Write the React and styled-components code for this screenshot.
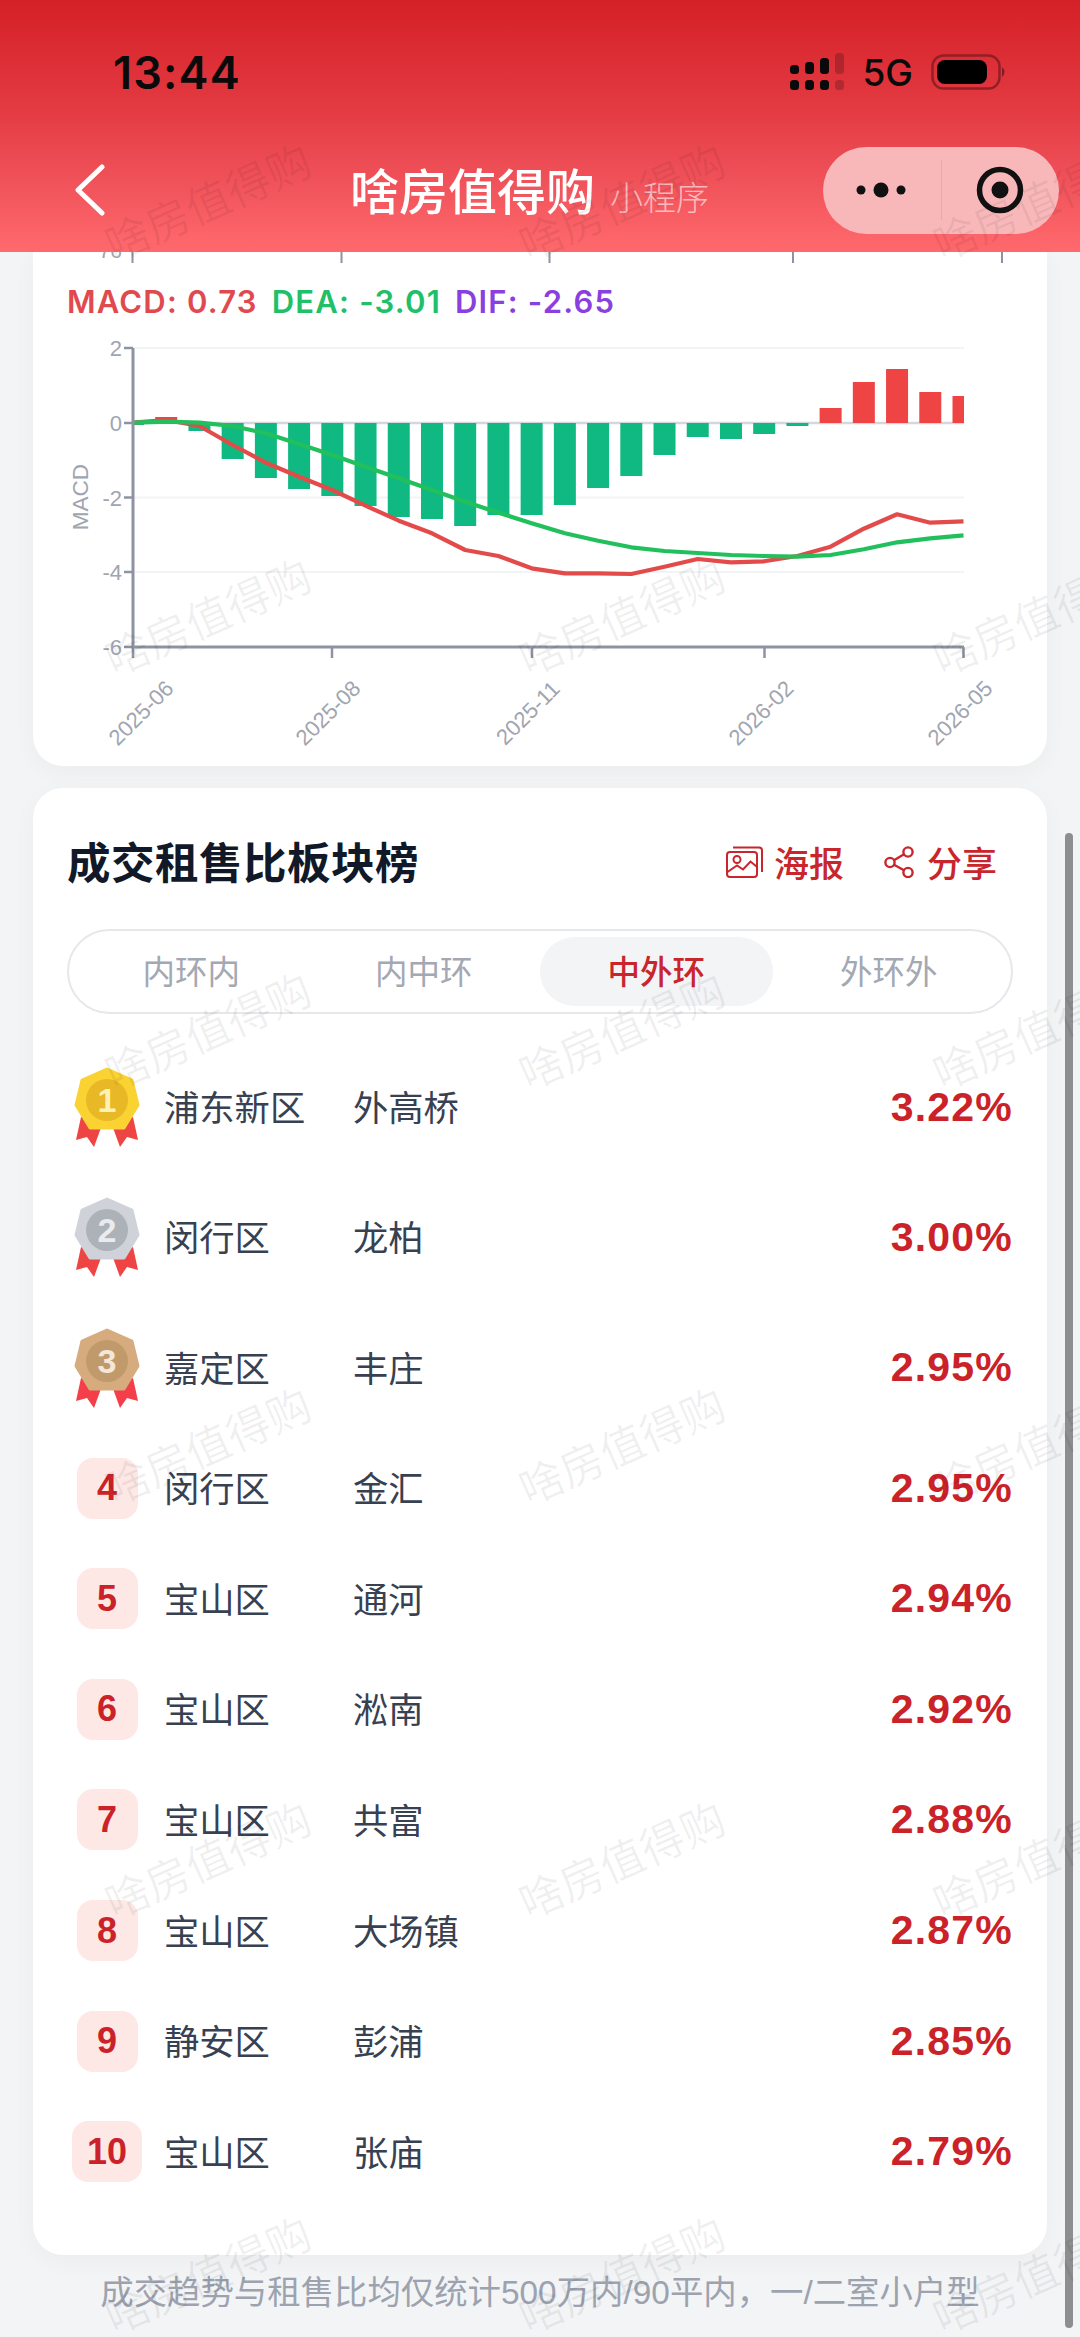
import React from 'react';
import styled, { createGlobalStyle } from 'styled-components';

const CJK = '"Liberation Sans", "Noto Sans CJK SC", sans-serif';

const Global = createGlobalStyle`
  html, body { margin: 0; padding: 0; background: #f3f4f6; }
  body { font-family: ${CJK}; }
  * { box-sizing: border-box; }
`;

const Page = styled.div`
  position: relative;
  width: 1080px;
  height: 2337px;
  overflow: hidden;
  background: #f3f4f6;
`;

const Header = styled.header`
  height: 252px;
  background: linear-gradient(180deg, #d52027 0%, #e23840 40%, #f0525a 72%, #ff6a6d 100%);
`;

const StatusBar = styled.div`
  height: 144px;
  display: flex;
  align-items: center;
  padding: 0 73px 0 113px;
`;

const Time = styled.span`
  font-family: Inter, sans-serif;
  font-weight: 600;
  font-size: 45px;
  color: #0a0a0a;
  letter-spacing: 1.2px;
`;

const StatusIcons = styled.div`
  margin-left: auto;
  display: flex;
  align-items: center;
  gap: 18px;
`;

const Net = styled.span`
  font-family: Inter, sans-serif;
  font-weight: 500;
  font-size: 37px;
  line-height: 1;
  color: #0a0a0a;
`;

const NavBar = styled.div`
  height: 92px;
  display: flex;
  align-items: center;
  padding: 0 21px 0 74px;
`;

const BackIcon = styled.svg`
  width: 32px;
  height: 52px;
  flex: none;
`;

const TitleGroup = styled.div`
  margin-left: 244px;
  margin-top: -3px;
  display: flex;
  align-items: baseline;
  gap: 15px;
`;

const Title = styled.span`
  font-size: 49px;
  font-weight: 500;
  font-family: "Noto Sans CJK SC", sans-serif;
  color: #fff;
`;

const SubTitle = styled.span`
  font-size: 33px;
  font-family: "Noto Sans CJK SC", sans-serif;
  font-weight: 300;
  color: rgba(255, 255, 255, 0.6);
`;

const Capsule = styled.div`
  margin-left: auto;
  width: 236px;
  height: 87px;
  border-radius: 44px;
  background: #f8b8ba;
  display: flex;
  align-items: center;
`;

const CapsulePart = styled.div`
  flex: 1;
  height: 100%;
  display: flex;
  align-items: center;
  justify-content: center;
  & + & { border-left: 1px solid rgba(0, 0, 0, 0.08); height: 60px; }
`;

const Card = styled.section`
  margin: 0 33px;
  background: #fff;
  box-shadow: 0 6px 24px rgba(0, 0, 0, 0.035);
`;

const ChartCard = styled(Card)`
  height: 514px;
  border-radius: 0 0 30px 30px;
`;

const TopTicks = styled.svg`
  display: block;
  width: 1014px;
  height: 11px;
`;

const Legend = styled.div`
  margin: 21px 0 5px 34px;
  height: 36px;
  line-height: 36px;
  font-size: 31px;
  font-weight: 600;
  font-family: Inter, sans-serif;
  letter-spacing: 1.2px;
  display: flex;
  gap: 14px;
  white-space: nowrap;
`;

const LegendItem = styled.span`
  color: ${p => p.$color};
`;

const ChartSvg = styled.svg`
  display: block;
  width: 1014px;
  height: 430px;
`;

const ListCard = styled(Card)`
  margin-top: 22px;
  height: 1467px;
  border-radius: 30px;
  padding: 50px 34px 0;
`;

const ListHead = styled.div`
  height: 48px;
  display: flex;
  align-items: center;
`;

const ListTitle = styled.h2`
  margin: -4px 0 0;
  font-size: 43.5px;
  font-weight: 700;
  font-family: "Noto Sans CJK SC", sans-serif;
  color: #111827;
  letter-spacing: 0.5px;
`;

const Actions = styled.div`
  margin-left: auto;
  margin-right: 16px;
  display: flex;
  align-items: center;
  gap: 40px;
`;

const Action = styled.span`
  display: inline-flex;
  align-items: center;
  gap: ${p => p.$gap}px;
  font-size: 35px;
  line-height: 44px;
  font-weight: 500;
  font-family: "Noto Sans CJK SC", sans-serif;
  color: #c9252c;
`;

const Tabs = styled.div`
  margin-top: 43px;
  height: 85px;
  border: 2px solid #e5e7eb;
  border-radius: 43px;
  padding: 6px;
  display: grid;
  grid-template-columns: repeat(4, 1fr);
`;

const Tab = styled.div`
  display: flex;
  align-items: center;
  justify-content: center;
  padding-bottom: 4px;
  border-radius: 36px;
  font-size: 32.5px;
  font-family: "Noto Sans CJK SC", sans-serif;
  font-weight: ${p => (p.$active ? 500 : 400)};
  color: ${p => (p.$active ? '#c9252c' : '#a3a8b2')};
  background: ${p => (p.$active ? '#f3f4f6' : 'transparent')};
`;

const Rows = styled.div`
  margin-top: 28px;
`;

const Row = styled.div`
  height: ${p => (p.$medal ? 130.3 : 110.6)}px;
  display: grid;
  grid-template-columns: 80px 189px 1fr auto;
  align-items: center;
`;

const RankCell = styled.div`
  display: flex;
  justify-content: center;
`;

const Pill = styled.div`
  min-width: 61px;
  height: 61px;
  padding: 0 15px;
  border-radius: 16px;
  background: #fde8e5;
  color: #cb2229;
  font-size: 36px;
  font-weight: 700;
  font-family: "Liberation Sans", sans-serif;
  display: flex;
  align-items: center;
  justify-content: center;
`;

const District = styled.div`
  margin: -3px 0 0 17px;
  font-size: 35.3px;
  font-family: "Noto Sans CJK SC", sans-serif;
  color: #374151;
  white-space: nowrap;
`;

const Area = styled.div`
  margin: -3px 0 0 17px;
  font-size: 35.3px;
  font-family: "Noto Sans CJK SC", sans-serif;
  color: #374151;
`;

const Ratio = styled.div`
  font-size: 41px;
  font-weight: 700;
  letter-spacing: 1.2px;
  font-family: "Liberation Sans", sans-serif;
  color: #cb2229;
`;

const Footnote = styled.div`
  margin-top: 18px;
  height: 40px;
  line-height: 40px;
  text-align: center;
  font-size: 33.4px;
  color: #9ca3af;
  font-family: "Liberation Sans", "Noto Sans CJK SC", sans-serif;
  white-space: nowrap;
`;

const Watermarks = styled.div`
  position: absolute;
  top: -7px;
  left: 0;
  display: grid;
  grid-template-columns: repeat(3, 414px);
  grid-auto-rows: 414.5px;
  pointer-events: none;
`;

const Mark = styled.span`
  display: flex;
  align-items: center;
  justify-content: center;
  font-size: 44px;
  font-family: "Noto Sans CJK SC", sans-serif;
  white-space: nowrap;
  color: rgba(0, 0, 0, 0.06);
  transform: rotate(-24deg);
`;

const Scrollbar = styled.div`
  position: absolute;
  left: 1065px;
  top: 833px;
  width: 8px;
  height: 1495px;
  border-radius: 4px;
  background: rgba(0, 0, 0, 0.42);
`;

const BARS = [-2, 6, -8, -36, -55, -66, -73, -83, -94, -96, -103, -92, -92, -82, -65, -53, -32, -14, -16, -11, -3, 15, 41, 54, 31, 27];
const RED = [308, 300, 318, 375, 428, 470, 510, 557, 602, 640, 690, 708, 745, 760, 760, 762, 740, 717, 727, 724, 708, 680, 626, 583, 608, 604];
const GREEN = [308, 305, 308, 318, 340, 372, 405, 440, 475, 510, 545, 578, 610, 640, 662, 682, 693, 699, 705, 708, 710, 705, 688, 667, 655, 646];
const X0 = 133;
const BAND = 33.22;
const px = i => X0 + i * BAND;
const line = arr => arr.map((z, i) => `${px(i).toFixed(1)},${(320 + z / 3).toFixed(1)}`).join(' ');
const YS = [[2, 348], [0, 423], [-2, 497.5], [-4, 572], [-6, 647]];
const XT = [
  ['2025-06', 133, 141],
  ['2025-08', 332, 328],
  ['2025-11', 532, 528],
  ['2026-02', 764.5, 761],
  ['2026-05', 963.5, 960],
];
const AXIS = '#8e93a1';
const TICK_TEXT = '#a0a5af';

function MacdChart() {
  return (
    <ChartSvg viewBox="33 325 1014 430">
      {YS.filter(y => y[0] !== 0 && y[0] !== -6).map(([v, y]) => (
        <line key={v} x1={X0} x2={964} y1={y} y2={y} stroke="#f3f4f6" strokeWidth="2" />
      ))}
      <line x1={X0} x2={964} y1={423} y2={423} stroke="#d5d7de" strokeWidth="2.5" />
      {BARS.map((h, i) => {
        const c = px(i);
        const l = Math.max(c - 11, X0);
        const r = Math.min(c + 11, 964);
        return (
          <rect
            key={i}
            x={l}
            width={r - l}
            y={h > 0 ? 423 - h : 423}
            height={Math.abs(h)}
            fill={h > 0 ? '#ef4444' : '#10b981'}
          />
        );
      })}
      <polyline points={line(RED)} fill="none" stroke="#e34b4b" strokeWidth="4.2" strokeLinejoin="round" />
      <polyline points={line(GREEN)} fill="none" stroke="#22c05c" strokeWidth="4.2" strokeLinejoin="round" />
      <path d="M133 348 V647 H964" fill="none" stroke={AXIS} strokeWidth="3" />
      {YS.map(([v, y]) => (
        <g key={v}>
          <line x1={124} x2={133} y1={y} y2={y} stroke={AXIS} strokeWidth="2.5" />
          <text x={122} y={y + 8} textAnchor="end" fontSize="22" fontFamily="Liberation Sans" fill={TICK_TEXT}>{v}</text>
        </g>
      ))}
      <text transform="translate(88 497) rotate(-90)" textAnchor="middle" fontSize="22.5" fontFamily="Liberation Sans" fill={TICK_TEXT}>MACD</text>
      {XT.map(([t, x, c]) => (
        <g key={t}>
          <line x1={x} x2={x} y1={647} y2={658} stroke={AXIS} strokeWidth="2.5" />
          <text transform={`translate(${c} 713) rotate(-45)`} textAnchor="middle" dominantBaseline="central" fontSize="22" fontFamily="Liberation Sans" fill={TICK_TEXT}>{t}</text>
        </g>
      ))}
    </ChartSvg>
  );
}

const MEDALS = {
  1: { body: '#fad232', inner: '#e9b826', num: '#fdf1b5', rib: '#ef4444' },
  2: { body: '#cfd3d9', inner: '#adb2b9', num: '#e9ebee', rib: '#ef4444' },
  3: { body: '#d6ab7d', inner: '#c19a6c', num: '#f3e7da', rib: '#f43f4a' },
};

function Medal({ n }) {
  const m = MEDALS[n];
  return (
    <svg width="66" height="80" viewBox="0 0 66 80">
      <polygon points="7,50 2,73 13,70 20,80 28,58" fill={m.rib} />
      <polygon points="59,50 64,73 53,70 46,80 38,58" fill={m.rib} />
      <polygon points="33,2 58,13 64,38 50,61 16,61 2,38 8,13" fill={m.body} stroke={m.body} strokeWidth="3" strokeLinejoin="round" />
      <circle cx="33" cy="33" r="21" fill={m.inner} />
      <text x="33" y="45" textAnchor="middle" fontSize="34" fontWeight="700" fontFamily="Liberation Sans" fill={m.num}>{n}</text>
    </svg>
  );
}

const DATA = [
  ['浦东新区', '外高桥', '3.22%'],
  ['闵行区', '龙柏', '3.00%'],
  ['嘉定区', '丰庄', '2.95%'],
  ['闵行区', '金汇', '2.95%'],
  ['宝山区', '通河', '2.94%'],
  ['宝山区', '淞南', '2.92%'],
  ['宝山区', '共富', '2.88%'],
  ['宝山区', '大场镇', '2.87%'],
  ['静安区', '彭浦', '2.85%'],
  ['宝山区', '张庙', '2.79%'],
];

export default function App() {
  return (
    <Page>
      <Global />
      <Header>
        <StatusBar>
          <Time>13:44</Time>
          <StatusIcons>
            <svg width="54" height="38" viewBox="0 0 54 38">
              {[0, 15, 30, 45].map((x, i) => (
                <g key={x} fill="#0a0a0a" opacity={i === 3 ? 0.22 : 1}>
                  <rect x={x} y={[12, 9, 5, 0][i]} width="9" height={[9, 12, 16, 21][i]} rx="3.5" />
                  <rect x={x} y="27" width="9" height="10" rx="3.5" />
                </g>
              ))}
            </svg>
            <Net>5G</Net>
            <svg width="76" height="36" viewBox="0 0 76 36">
              <rect x="1.5" y="1.5" width="67" height="33" rx="11" fill="none" stroke="#7a1a20" strokeOpacity="0.75" strokeWidth="2.5" />
              <rect x="6" y="6" width="50" height="24" rx="8" fill="#000" />
              <path d="M71 13 q5 5 0 10 z" fill="#7a1a20" opacity="0.9" />
            </svg>
          </StatusIcons>
        </StatusBar>
        <NavBar>
          <BackIcon viewBox="0 0 32 52">
            <path d="M28 3 L4 26 L28 49" fill="none" stroke="#fff" strokeWidth="5" strokeLinecap="round" strokeLinejoin="round" />
          </BackIcon>
          <TitleGroup>
            <Title>啥房值得购</Title>
            <SubTitle>小程序</SubTitle>
          </TitleGroup>
          <Capsule>
            <CapsulePart>
              <svg width="54" height="20" viewBox="0 0 54 20">
                <circle cx="6" cy="10" r="4.5" fill="#111" />
                <circle cx="26" cy="10" r="7.5" fill="#111" />
                <circle cx="46" cy="10" r="4.5" fill="#111" />
              </svg>
            </CapsulePart>
            <CapsulePart>
              <svg width="50" height="50" viewBox="0 0 50 50">
                <circle cx="25" cy="25" r="20.5" fill="none" stroke="#111" strokeWidth="5.5" />
                <circle cx="25" cy="25" r="8.5" fill="#111" />
              </svg>
            </CapsulePart>
          </Capsule>
        </NavBar>
      </Header>

      <ChartCard>
        <TopTicks viewBox="33 252 1014 11">
          <text x="122" y="258" textAnchor="end" fontSize="21" fontFamily="Liberation Sans" fill={TICK_TEXT}>76</text>
          {[132.5, 341.5, 549.5, 793, 1002].map(x => (
            <line key={x} x1={x} x2={x} y1="252" y2="263" stroke={AXIS} strokeWidth="2" />
          ))}
        </TopTicks>
        <Legend>
          <LegendItem $color="#e04a4e">MACD: 0.73</LegendItem>
          <LegendItem $color="#20bf68">DEA: -3.01</LegendItem>
          <LegendItem $color="#8a3fe0">DIF: -2.65</LegendItem>
        </Legend>
        <MacdChart />
      </ChartCard>

      <ListCard>
        <ListHead>
          <ListTitle>成交租售比板块榜</ListTitle>
          <Actions>
            <Action $gap={11}>
              <svg width="37" height="32" viewBox="0 0 37 32" fill="none" stroke="#c9252c" strokeWidth="2">
                <rect x="1" y="6" width="30" height="25" rx="3" />
                <path d="M7 1.5 H33 a3 3 0 0 1 3 3 V26" />
                <circle cx="11" cy="13.5" r="3.5" />
                <path d="M1.5 26 L11 19.5 L17 23.5 L24.5 15.5 L30.5 20.5" />
              </svg>
              <span>海报</span>
            </Action>
            <Action $gap={13}>
              <svg width="30" height="32" viewBox="0 0 30 32" fill="none" stroke="#c9252c" strokeWidth="2.4">
                <circle cx="24" cy="6" r="4.6" />
                <circle cx="6" cy="16.5" r="4.6" />
                <circle cx="24" cy="26.5" r="4.6" />
                <path d="M20 8.3 L10 14.2 M10 18.8 L20 24.2" />
              </svg>
              <span>分享</span>
            </Action>
          </Actions>
        </ListHead>
        <Tabs>
          <Tab>内环内</Tab>
          <Tab>内中环</Tab>
          <Tab $active>中外环</Tab>
          <Tab>外环外</Tab>
        </Tabs>
        <Rows>
          {DATA.map(([d, a, r], i) => (
            <Row key={i} $medal={i < 3}>
              <RankCell>
                {i < 3 ? <Medal n={i + 1} /> : <Pill>{i + 1}</Pill>}
              </RankCell>
              <District>{d}</District>
              <Area>{a}</Area>
              <Ratio>{r}</Ratio>
            </Row>
          ))}
        </Rows>
      </ListCard>

      <Footnote>成交趋势与租售比均仅统计500万内/90平内，一/二室小户型</Footnote>

      <Watermarks>
        {Array.from({ length: 21 }, (_, i) => <Mark key={i}>啥房值得购</Mark>)}
      </Watermarks>
      <Scrollbar />
    </Page>
  );
}
